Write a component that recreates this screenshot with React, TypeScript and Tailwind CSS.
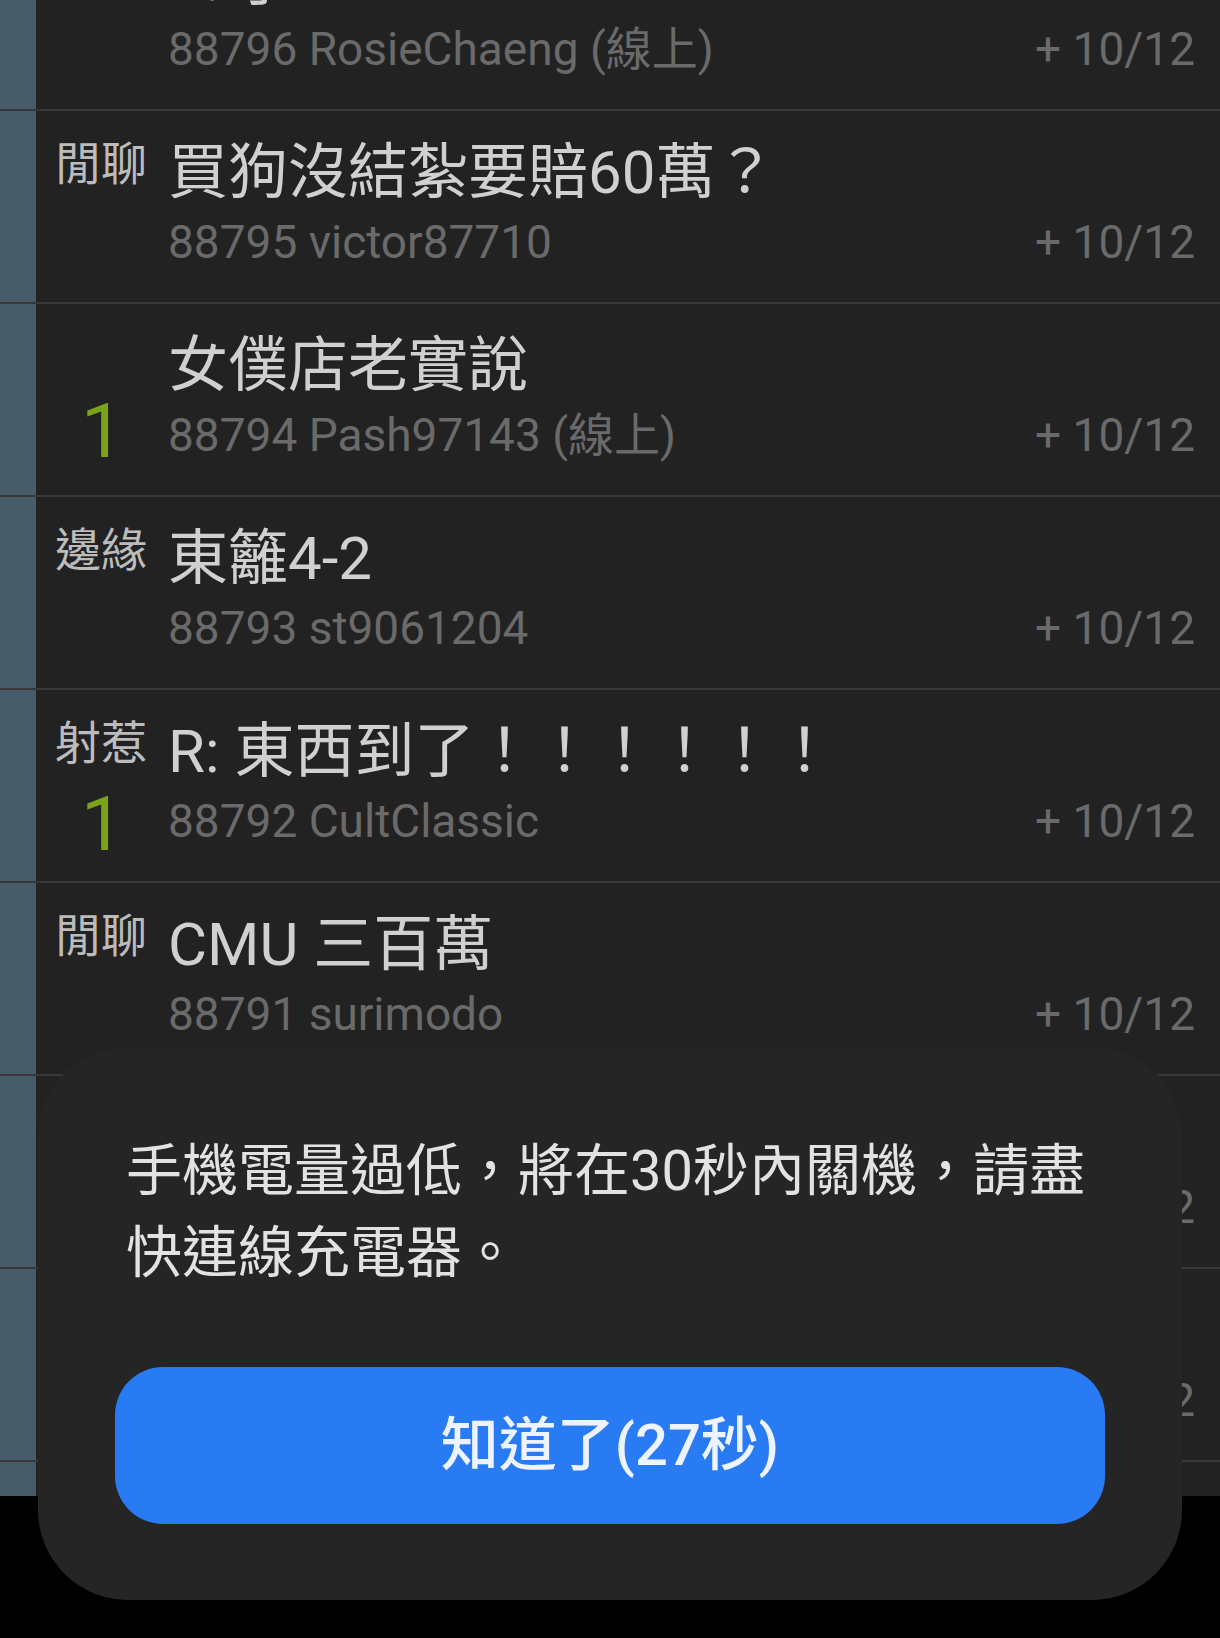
const rows = [
  { tag: "", count: "", title: "R: 了", meta: "88796 RosieChaeng (線上)", date: "+ 10/12" },
  { tag: "閒聊", count: "", title: "買狗沒結紮要賠60萬？", meta: "88795 victor87710", date: "+ 10/12" },
  { tag: "", count: "1", title: "女僕店老實說", meta: "88794 Pash97143 (線上)", date: "+ 10/12" },
  { tag: "邊緣", count: "", title: "東籬4-2", meta: "88793 st9061204", date: "+ 10/12" },
  { tag: "射惹", count: "1", title: "R: 東西到了！！！！！！", meta: "88792 CultClassic", date: "+ 10/12" },
  { tag: "閒聊", count: "", title: "CMU 三百萬", meta: "88791 surimodo", date: "+ 10/12" },
  { tag: "閒聊", count: "", title: "今天吃什麼", meta: "88790 kevin0512", date: "+ 10/12" },
  { tag: "", count: "", title: "R: 颱風假", meta: "88789 moonlight22", date: "+ 10/12" },
  { tag: "", count: "", title: "", meta: "", date: "" },
];

function Row({ tag, count, title, meta, date }: (typeof rows)[number]) {
  return (
    <div className="flex h-[191px] bg-[#222222]">
      <div className="w-[36px] shrink-0 bg-[#475b68]" />
      <div className="flex w-[132px] shrink-0 flex-col pl-[19px] pt-[30px]">
        <div className="h-[46px] whitespace-nowrap text-[46px] leading-[46px] text-[#bcbcbc]">{tag}</div>
        {count && (
          <div className={`${tag ? "mt-[20px]" : "mt-[13px]"} pl-[26px] text-[76px] leading-[76px] text-[#7aa319]`}>
            {count}
          </div>
        )}
      </div>
      <div className="min-w-0 flex-1 pr-[25px] pt-[27px]">
        <div className="h-[70px] whitespace-nowrap text-[60px] leading-[70px] text-[#d0d0d0]">{title}</div>
        <div className="mt-[7px] flex justify-between whitespace-nowrap text-[46px] leading-[54px] text-[#6a6a6a]">
          <span>{meta}</span>
          <span>{date}</span>
        </div>
      </div>
    </div>
  );
}

export default function App() {
  return (
    <div className="relative h-[1638px] w-[1220px] overflow-hidden bg-black font-['Roboto','Noto_Sans_CJK_TC',sans-serif]">
      <div className="h-[1496px] overflow-hidden bg-[#222222]">
        <div className="-mt-[82px]">
          {rows.map((r, i) => (
            <div key={i}>
              <Row {...r} />
              <div className="h-[2px] bg-[#383838]" />
            </div>
          ))}
        </div>
      </div>

      {/* low battery dialog */}
      <div className="absolute left-[38px] top-[1047px] h-[553px] w-[1144px] rounded-[90px] bg-[#252525] px-[77px] pt-[83px]">
        <p className="whitespace-nowrap pl-[11px] text-[56px] leading-[82px] text-[#e2e2e2]">
          手機電量過低，將在30秒內關機，請盡
          <br />
          快連線充電器。
        </p>
        <button className="mt-[73px] flex h-[157px] w-full items-center justify-center rounded-[48px] bg-[#297bf4] text-[58px] font-medium text-[#eef4ff]">
          知道了(27秒)
        </button>
      </div>
    </div>
  );
}
